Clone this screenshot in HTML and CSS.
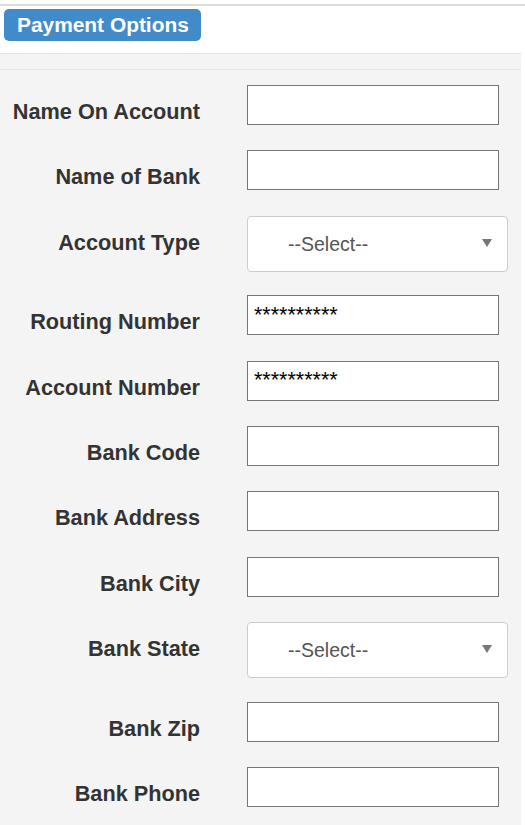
FILE: index.html
```html
<!DOCTYPE html>
<html>
<head>
<meta charset="utf-8">
<link rel="stylesheet" href="styles.css">
</head>
<body>
<div class="top-rule"></div>
<div class="header">
  <span class="badge">Payment Options</span>
</div>
<div class="band"></div>
<form class="form">
  <div class="row"><label class="lbl">Name On Account</label><input class="field" type="text"></div>
  <div class="row"><label class="lbl">Name of Bank</label><input class="field" type="text"></div>
  <div class="row"><label class="lbl">Account Type</label>
    <div class="sel-wrap">
      <select class="sel"><option>--Select--</option></select>
      <svg class="arrow" width="10" height="8" viewBox="0 0 10 8"><path d="M0 0H10L5 8Z" fill="#777"/></svg>
    </div>
  </div>
  <div class="row"><label class="lbl">Routing Number</label><input class="field" type="text" value="**********"></div>
  <div class="row"><label class="lbl">Account Number</label><input class="field" type="text" value="**********"></div>
  <div class="row"><label class="lbl">Bank Code</label><input class="field" type="text"></div>
  <div class="row"><label class="lbl">Bank Address</label><input class="field" type="text"></div>
  <div class="row"><label class="lbl">Bank City</label><input class="field" type="text"></div>
  <div class="row"><label class="lbl">Bank State</label>
    <div class="sel-wrap">
      <select class="sel"><option>--Select--</option></select>
      <svg class="arrow" width="10" height="8" viewBox="0 0 10 8"><path d="M0 0H10L5 8Z" fill="#777"/></svg>
    </div>
  </div>
  <div class="row"><label class="lbl">Bank Zip</label><input class="field" type="text"></div>
  <div class="row"><label class="lbl">Bank Phone</label><input class="field" type="text"></div>
</form>
</body>
</html>
```
FILE: styles.css
```css
html, body {
  margin: 0;
  padding: 0;
  background: #fff;
  font-family: "Liberation Sans", Arial, sans-serif;
}
.top-rule {
  margin-top: 4px;
  height: 2px;
  background: #dcdcdc;
}
.header {
  height: 48px;
  box-sizing: border-box;
  padding: 3px 4px 0;
  background: #fff;
  border-bottom: 1px solid #e4e4e4;
  width: 521px;
}
.badge {
  display: inline-block;
  height: 32px;
  line-height: 31px;
  padding: 0 12px 0 13px;
  background: #428bca;
  color: #fff;
  font-weight: bold;
  font-size: 20.9px;
  border-radius: 5px;
}
.band {
  width: 521px;
  height: 15px;
  background: #f4f4f4;
  border-bottom: 1px solid #e6e6e6;
}
.form {
  width: 521px;
  margin: 0;
  padding: 15px 0 19px;
  background: #f4f4f4;
  display: flex;
  flex-direction: column;
  gap: 25.4px;
}
.row {
  display: flex;
  align-items: flex-start;
}
.lbl {
  width: 200px;
  flex: none;
  text-align: right;
  font-weight: bold;
  font-size: 21.7px;
  line-height: 24px;
  padding-top: 15px;
  color: #333;
  margin-right: 47px;
}
.field {
  box-sizing: border-box;
  width: 252px;
  height: 40px;
  margin: 0;
  border: 1px solid #767676;
  border-radius: 0;
  padding: 0 6px;
  background: #fff;
  font-family: "Liberation Sans", Arial, sans-serif;
  font-size: 21.5px;
  color: #000;
  outline: none;
}
.sel-wrap {
  position: relative;
  width: 261px;
  height: 56px;
  margin-bottom: -2px;
}
.sel {
  -webkit-appearance: none;
  appearance: none;
  box-sizing: border-box;
  width: 100%;
  height: 100%;
  margin: 0;
  border: 1px solid #ccc;
  border-radius: 4px;
  background: #fff;
  padding: 0 0 0 40px;
  font-family: "Liberation Sans", Arial, sans-serif;
  font-size: 19.5px;
  color: #555;
}
.arrow {
  position: absolute;
  left: 235px;
  top: 23px;
  pointer-events: none;
}
```
